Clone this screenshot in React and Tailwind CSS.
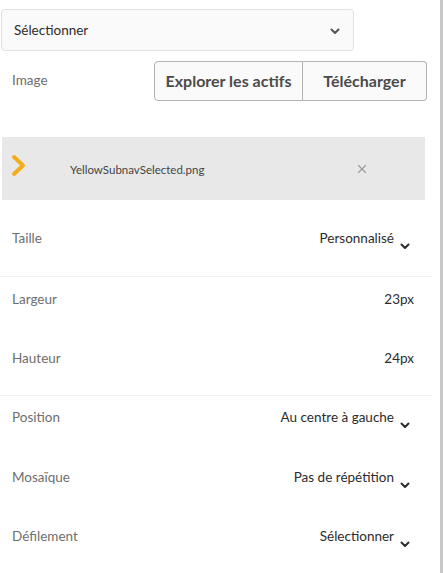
import { X } from 'lucide-react';

const FONT = { fontFamily: 'Lato, "Noto Sans", sans-serif' };

function SmallChevron({ className = '' }) {
  return (
    <svg width="12" height="8" viewBox="0 0 12 8" className={className}>
      <path d="M2.5 2.5 L6 6 L9.5 2.5" fill="none" stroke="currentColor" strokeWidth="2" strokeLinecap="round" strokeLinejoin="round" />
    </svg>
  );
}

function PropRow({ label, value, dropdown, size = 'h-[59px] pt-[11px]' }) {
  return (
    <div className={`flex items-start justify-between pl-3 ${size}`}>
      <span className="text-[13.5px] text-[#6e6e6e]">{label}</span>
      <div className={`flex items-start ${dropdown ? 'pr-[22px]' : 'pr-[19px]'}`}>
        <span className="text-[13.5px] text-[#2c2c2c]">{value}</span>
        {dropdown && <SmallChevron className="ml-[5px] mt-[14px] text-[#2c2c2c]" />}
      </div>
    </div>
  );
}

export default function App() {
  return (
    <div className="h-[573px] w-[443px] flex bg-white overflow-hidden" style={FONT}>
      <div className="w-[433px] flex flex-col">
        {/* top select */}
        <div className="mt-[9px] ml-px w-[353px] h-[42px] border border-[#e1e1e1] rounded bg-[#fafafa] pl-3 pr-3 flex items-center justify-between">
          <span className="mt-px text-[13.5px] text-[#2c2c2c]">Sélectionner</span>
          <SmallChevron className="mt-[3px] text-[#555]" />
        </div>

        {/* image source */}
        <div className="mt-[10px] h-10 flex items-center">
          <span className="pl-3 text-[13.5px] text-[#6e6e6e]">Image</span>
          <div className="ml-auto mr-[6px] flex">
            <button className="w-[149px] h-10 border border-[#b3b3b3] rounded-l bg-[#fafafa] text-[16px] font-bold text-[#4b4b4b]">
              Explorer les actifs
            </button>
            <button className="w-[124px] h-10 border border-l-0 border-[#b3b3b3] rounded-r bg-[#fafafa] text-[16px] font-bold text-[#4b4b4b]">
              Télécharger
            </button>
          </div>
        </div>

        {/* selected file */}
        <div className="mt-9 ml-[2px] w-[423px] h-[64px] bg-[#e8e8e8] flex items-center">
          <svg width="18" height="24" viewBox="0 0 18 24" className="ml-[8px] mb-[4px]">
            <path d="M4 3 L13 11.5 L4 20" fill="none" stroke="#f2ad1d" strokeWidth="4" strokeLinecap="round" strokeLinejoin="round" />
          </svg>
          <span className="ml-[42px] mt-[2px] text-[11.5px] text-[#444]">YellowSubnavSelected.png</span>
          <X size={14} strokeWidth={2} className="ml-auto mr-[56px] mt-[2px] text-[#9a9a9a]" />
        </div>

        {/* properties */}
        <div className="mt-4 border-b border-[#f0f0f0]">
          <PropRow label="Taille" value="Personnalisé" dropdown size="h-[60px] pt-[12px]" />
        </div>
        <div className="border-b border-[#f0f0f0]">
          <PropRow label="Largeur" value="23px" size="h-[59px] pt-[12px]" />
          <PropRow label="Hauteur" value="24px" size="h-[59px] pt-[12px]" />
        </div>
        <PropRow label="Position" value="Au centre à gauche" dropdown size="h-[60px] pt-[11px]" />
        <PropRow label="Mosaïque" value="Pas de répétition" dropdown size="h-[60px] pt-[12px]" />
        <PropRow label="Défilement" value="Sélectionner" dropdown size="h-[59px] pt-[11px]" />
      </div>
      <div className="ml-auto w-[3px] h-full bg-[#c8c8c8]" />
    </div>
  );
}
